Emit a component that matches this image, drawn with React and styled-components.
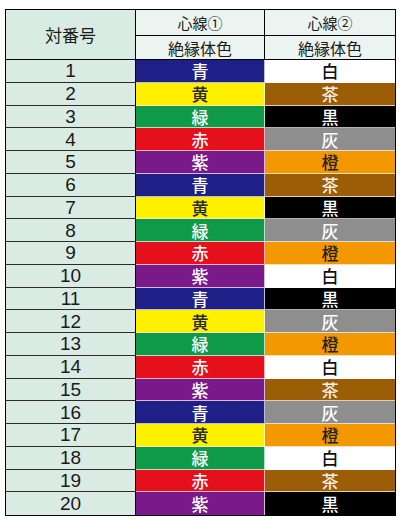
import React from "react";
import styled, { createGlobalStyle } from "styled-components";

const GlobalStyle = createGlobalStyle`
  body {
    margin: 0;
    background: #ffffff;
    font-family: "Noto Sans CJK JP", "Noto Sans", sans-serif;
  }
`;

const COLORS = {
  青: { bg: "#1f1f88", fg: "#ffffff" },
  黄: { bg: "#fff000", fg: "#2a2a2a" },
  緑: { bg: "#0f9a48", fg: "#ffffff" },
  赤: { bg: "#e5101c", fg: "#ffffff" },
  紫: { bg: "#7a1a8a", fg: "#ffffff" },
  白: { bg: "#ffffff", fg: "#111111" },
  茶: { bg: "#9b5e06", fg: "#fbefe0" },
  黒: { bg: "#000000", fg: "#ffffff" },
  灰: { bg: "#8e8e8e", fg: "#ffffff" },
  橙: { bg: "#f39800", fg: "#222222" },
};

const first = ["青", "黄", "緑", "赤", "紫"];
const second = ["白", "茶", "黒", "灰", "橙", "茶", "黒", "灰", "橙", "白", "黒", "灰", "橙", "白", "茶", "灰", "橙", "白", "茶", "黒"];

const rows = second.map((c2, i) => ({ no: i + 1, c1: first[i % 5], c2 }));

const App = () => {
  return (
    <>
      <GlobalStyle />
      <Table>
        <PairHead>対番号</PairHead>
        <CoreHead>心線①</CoreHead>
        <CoreHead $last>心線②</CoreHead>
        <SubHead>絶縁体色</SubHead>
        <SubHead $last>絶縁体色</SubHead>
        {rows.map((r) => (
          <React.Fragment key={r.no}>
            <NumCell $end={r.no === 20}>{r.no}</NumCell>
            <ColorCell $bg={COLORS[r.c1].bg} $fg={COLORS[r.c1].fg} $end={r.no === 20}>{r.c1}</ColorCell>
            <ColorCell $bg={COLORS[r.c2].bg} $fg={COLORS[r.c2].fg} $end={r.no === 20} $last>{r.c2}</ColorCell>
          </React.Fragment>
        ))}
      </Table>
    </>
  );
};

export default App;

const Table = styled.div`
  display: grid;
  grid-template-columns: 130px 129px 130px;
  grid-template-rows: 26px 24px repeat(20, 22.75px);
  width: 389px;
  margin: 9px 0 0 5px;
  border: 1.5px solid #000;
`;

const PairHead = styled.div`
  grid-row: 1 / span 2;
  display: flex;
  align-items: center;
  justify-content: center;
  background: #d9ece3;
  border-right: 1px solid #000;
  border-bottom: 1px solid #000;
  font-size: 17px;
  color: #1a1a1a;
`;

const CoreHead = styled.div`
  display: flex;
  align-items: center;
  justify-content: center;
  background: #ebf4f0;
  border-right: ${(p) => (p.$last ? "none" : "1px solid #000")};
  border-bottom: 1px solid #000;
  font-size: 15px;
  color: #1a1a1a;
`;

const SubHead = styled(CoreHead)`
  font-size: 16px;
`;

const NumCell = styled.div`
  display: flex;
  align-items: center;
  justify-content: center;
  background: #d9ebe2;
  border-right: 1px solid #000;
  border-bottom: ${(p) => (p.$end ? "none" : "1px solid #2b2b2b")};
  font-family: "Liberation Sans", Arial, sans-serif;
  font-size: 19px;
  color: #1a1a1a;
  line-height: 1;
`;

const ColorCell = styled.div`
  display: flex;
  align-items: center;
  justify-content: center;
  background: ${(p) => p.$bg};
  color: ${(p) => p.$fg};
  border-right: ${(p) => (p.$last ? "none" : "1px solid rgba(255,255,255,0.7)")};
  border-bottom: ${(p) => (p.$end ? "none" : "1px solid rgba(255,255,255,0.7)")};
  font-size: 17px;
  font-weight: 500;
  line-height: 1;
`;
